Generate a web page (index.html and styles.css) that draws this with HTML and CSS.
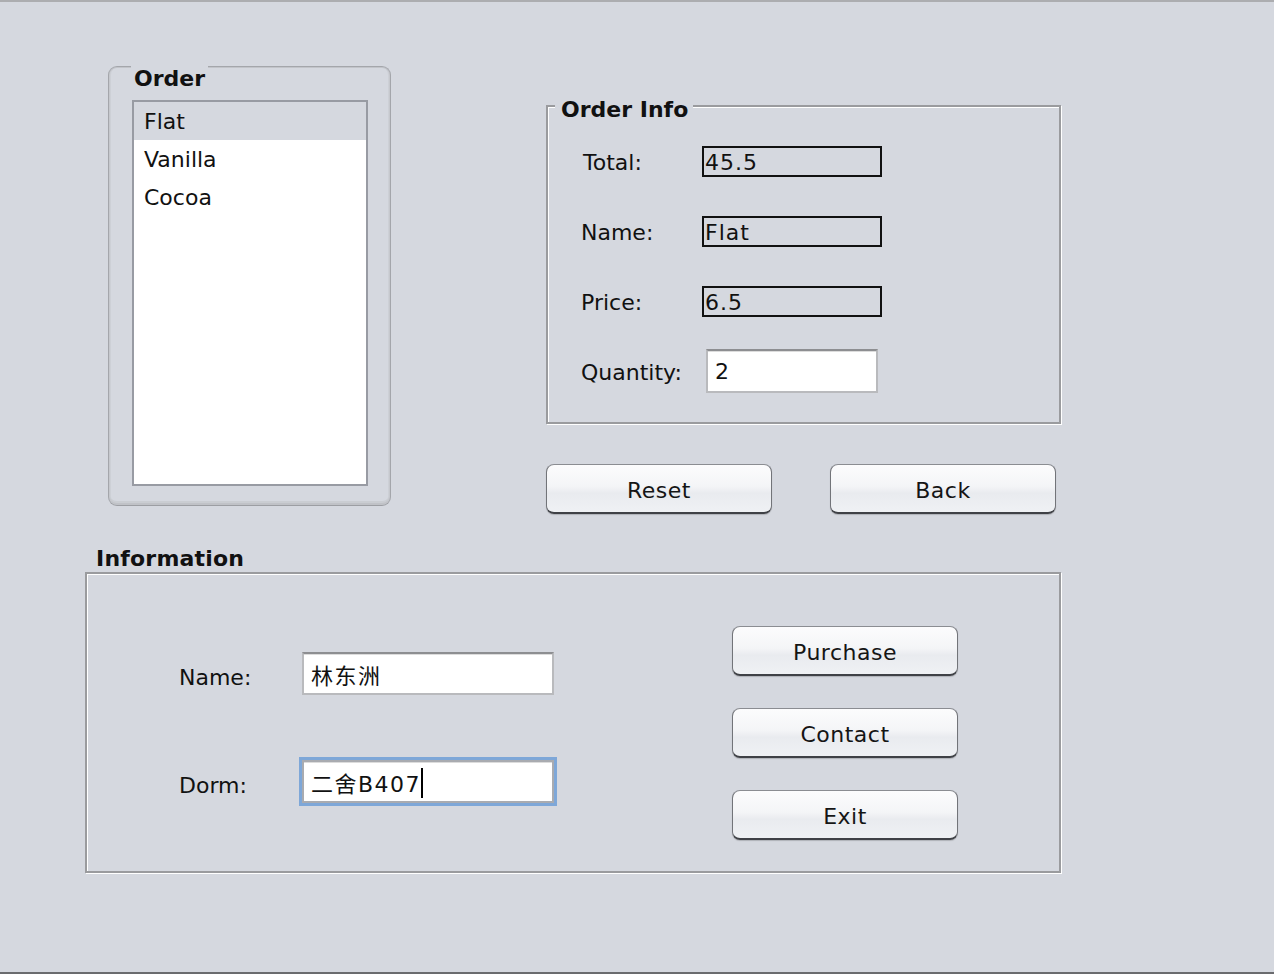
FILE: index.html
```html
<!DOCTYPE html>
<html>
<head>
<meta charset="utf-8">
<link rel="stylesheet" href="styles.css">
</head>
<body>
<div class="window">
  <div class="top">
    <div class="order-group">
      <div class="group-title">Order</div>
      <ul class="list">
        <li class="item selected">Flat</li>
        <li class="item">Vanilla</li>
        <li class="item">Cocoa</li>
      </ul>
    </div>
    <div class="right">
      <div class="etched order-info">
        <div class="etched-title">Order Info</div>
        <div class="info-grid">
          <div class="label total">Total:</div>
          <div class="ro-field">45.5</div>
          <div class="label">Name:</div>
          <div class="ro-field">Flat</div>
          <div class="label">Price:</div>
          <div class="ro-field">6.5</div>
          <div class="label">Quantity:</div>
          <div class="text-field qty">2</div>
        </div>
      </div>
      <div class="btn-row">
        <button class="btn">Reset</button>
        <button class="btn">Back</button>
      </div>
    </div>
  </div>
  <div class="info-section">
    <div class="section-title">Information</div>
    <div class="etched info-panel">
      <div class="form">
        <div class="label low">Name:</div>
        <div class="text-field wide">林东洲</div>
        <div class="label low">Dorm:</div>
        <div class="text-field wide focused">二舍B407<span class="caret"></span></div>
      </div>
      <div class="btn-col">
        <button class="btn">Purchase</button>
        <button class="btn">Contact</button>
        <button class="btn">Exit</button>
      </div>
    </div>
  </div>
</div>
</body>
</html>
```

FILE: styles.css
```css
html, body {
  margin: 0;
  padding: 0;
  background: #d5d8df;
}

.window {
  width: 1274px;
  height: 974px;
  box-sizing: border-box;
  background: #d5d8df;
  border-top: 2px solid #acadb0;
  border-bottom: 2px solid #6a6b6e;
  padding-top: 64px;
  font-family: "DejaVu Sans", "Noto Sans CJK SC", sans-serif;
  font-size: 22px;
  color: #111;
  overflow: hidden;
}

.top {
  display: flex;
  align-items: flex-start;
  padding-left: 108px;
}

/* Aqua-style rounded group box */
.order-group {
  position: relative;
  width: 283px;
  height: 440px;
  box-sizing: border-box;
  border: 1px solid #a4a6ab;
  border-bottom-color: #9c9ea3;
  border-radius: 9px;
  padding: 33px 0 0 23px;
  box-shadow: inset 0 1px 0 #c2c4c9, inset 1px 0 0 #c6c8cd, inset -1px 0 0 #c6c8cd,
              inset 0 -2px 0 #c0c2c7, inset 0 -4px 0 #cacdd2, inset 2px 0 0 #cdd0d6, inset -2px 0 0 #cdd0d6;
}

.group-title {
  position: absolute;
  top: -1px;
  left: 22px;
  padding: 0 3px;
  background: #d5d8df;
  font-weight: bold;
  line-height: 26px;
}

.list {
  list-style: none;
  margin: 0;
  padding: 0;
  width: 236px;
  height: 386px;
  box-sizing: border-box;
  border: 2px solid #989ba3;
  background: #fff;
}

.item {
  height: 38px;
  box-sizing: border-box;
  padding: 2px 0 0 10px;
  line-height: 36px;
}

.item.selected {
  background: #d5d8df;
}

.right {
  margin-left: 155px;
  margin-top: 39px;
}

.etched {
  position: relative;
  box-sizing: border-box;
  border: 2px solid #9a9b9e;
  box-shadow: inset 1px 1px 0 #fff, 1px 1px 0 #fff;
}

.etched-title {
  position: absolute;
  top: -10px;
  left: 7px;
  padding: 0 5px 0 6px;
  background: #d5d8df;
  font-weight: bold;
  line-height: 26px;
}

.order-info {
  width: 515px;
  height: 319px;
  padding: 19px 0 0 33px;
}

.info-grid {
  display: grid;
  grid-template-columns: 121px auto;
  grid-auto-rows: 70px;
  align-items: center;
  justify-items: start;
}

.label {
  line-height: 26px;
  padding-top: 4px;
}

.label.total {
  margin-left: 2px;
}

.label.low {
  padding-top: 8px;
}

.ro-field {
  width: 180px;
  height: 31px;
  box-sizing: border-box;
  border: 2px solid #111;
  padding: 1px 0 0 1px;
  line-height: 28px;
  letter-spacing: 1px;
}

.text-field {
  box-sizing: border-box;
  background: #fff;
  border: 2px solid #b9babd;
  border-top-color: #8d8e91;
  box-shadow: inset 0 1px 0 #dcdcdc;
  line-height: 38px;
}

.qty {
  width: 172px;
  height: 44px;
  margin-left: 4px;
  padding: 2px 0 0 7px;
  line-height: 38px;
}

.btn-row {
  display: flex;
  gap: 58px;
  margin-top: 40px;
}

.btn {
  width: 226px;
  height: 50px;
  margin: 0;
  padding: 3px 0 0;
  box-sizing: border-box;
  border: 1px solid #727479;
  border-top-color: #8b8d92;
  border-bottom: 2px solid #3f4146;
  border-radius: 8px;
  background: linear-gradient(#fcfcfd 0%, #f4f5f7 45%, #e9ebef 60%, #eff1f4 100%);
  box-shadow: 0 1px 1px rgba(0, 0, 0, 0.18);
  font-family: "DejaVu Sans", sans-serif;
  font-size: 22px;
  color: #151515;
  letter-spacing: 0.5px;
}

.info-section {
  padding-left: 85px;
}

.section-title {
  font-weight: bold;
  line-height: 26px;
  margin-top: 32px;
  padding-left: 11px;
  letter-spacing: 0.2px;
}

.info-panel {
  width: 976px;
  height: 301px;
  display: flex;
  align-items: flex-start;
}

.form {
  display: grid;
  grid-template-columns: 123px 252px;
  grid-template-rows: 43px 43px;
  row-gap: 65px;
  align-items: center;
  margin: 78px 0 0 92px;
}

.wide {
  width: 252px;
  height: 43px;
  padding: 6px 0 0 7px;
  line-height: 34px;
  letter-spacing: 1.5px;
}

.focused {
  box-shadow: inset 0 1px 0 #dcdcdc, 0 0 0 3px #7ea7d8;
  border-color: #a9abb0;
}

.caret {
  display: inline-block;
  width: 2px;
  height: 30px;
  background: #000;
  vertical-align: -6px;
  margin-left: 0;
}

.btn-col {
  display: flex;
  flex-direction: column;
  gap: 32px;
  margin: 52px 0 0 178px;
}
```
